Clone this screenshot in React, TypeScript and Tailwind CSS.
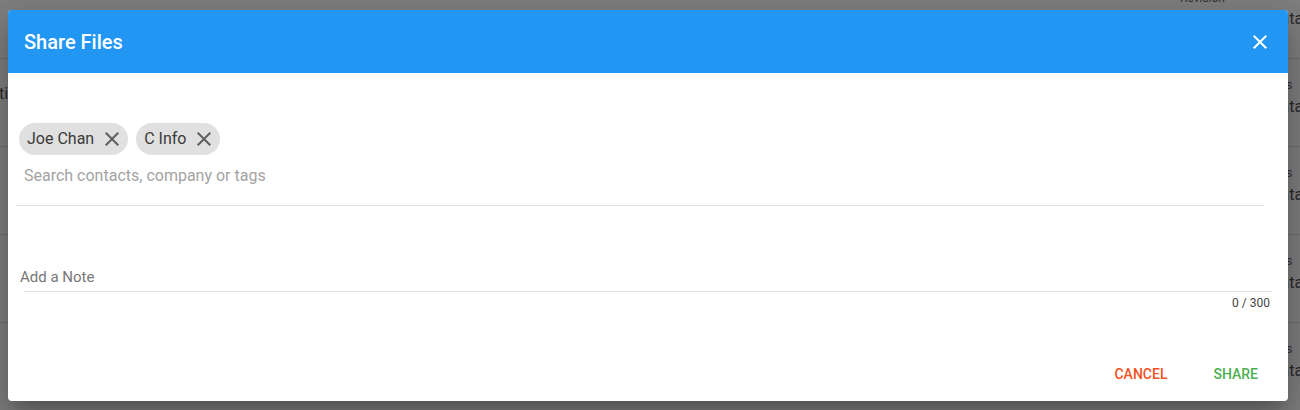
import React from "react";

const CloseIcon = ({ className }: { className?: string }) => (
  <svg viewBox="0 0 24 24" className={className} fill="currentColor" aria-hidden="true">
    <path d="M19 6.41 17.59 5 12 10.59 6.41 5 5 6.41 10.59 12 5 17.59 6.41 19 12 13.41 17.59 19 19 17.59 13.41 12z" />
  </svg>
);

const Chip = ({ label }: { label: string }) => (
  <div className="flex h-[32px] items-center rounded-full bg-[#e0e0e0] pl-[8px] pr-[4px]">
    <span className="text-[16px] leading-[20px] text-[#3a3a3a]">{label}</span>
    <CloseIcon className="ml-[6px] h-[24px] w-[24px] text-[#5f5f5f]" />
  </div>
);

const rows = [0, 1, 2, 3];

export default function App() {
  return (
    <div
      className="relative h-[410px] w-[1300px] overflow-hidden bg-white"
      style={{ fontFamily: "Roboto, 'Liberation Sans', Arial, sans-serif" }}
    >
      {/* underlying page */}
      <div className="mt-[-29px] flex flex-col">
        <div className="flex h-[88px] border-b border-[#e0e0e0] pt-[14px]">
          <div className="ml-[1180px] w-[78px] shrink-0">
            <span className="text-[12px] leading-[16px] text-[#666]">Revision</span>
          </div>
          <div className="flex shrink-0 flex-col">
            <span className="text-[12px] leading-[16px] text-[#666]">Status</span>
            <span className="ml-[12px] mt-[8px] text-[16px] leading-[20px] text-[#555]">Data</span>
          </div>
        </div>
        {rows.map((r) => (
          <div key={r} className="flex h-[88px] border-b border-[#e0e0e0]">
            <div className="ml-[-44px] w-[1302px] shrink-0 pt-[23px]">
              {r === 0 && <span className="text-[16px] leading-[20px] text-[#555]">Quotation</span>}
            </div>
            <div className="flex shrink-0 flex-col pt-[18px]">
              <span className="text-[12px] leading-[16px] text-[#666]">Status</span>
              <span className="ml-[12px] mt-[4px] text-[16px] leading-[20px] text-[#555]">Data</span>
            </div>
          </div>
        ))}
      </div>

      {/* backdrop */}
      <div className="absolute inset-0 bg-black/50" />

      {/* dialog */}
      <div className="absolute left-[8px] top-[10px] flex h-[391px] w-[1280px] flex-col overflow-hidden rounded-[4px] bg-white shadow-[0_11px_15px_-7px_rgba(0,0,0,0.2),0_24px_38px_3px_rgba(0,0,0,0.14),0_9px_46px_8px_rgba(0,0,0,0.12)]">
        <div className="flex h-[63px] shrink-0 items-center justify-between bg-[#2196f3] pl-[16px] pr-[16px]">
          <span className="text-[20px] font-medium leading-[24px] text-white">Share Files</span>
          <CloseIcon className="h-[24px] w-[24px] text-white" />
        </div>

        <div className="flex flex-1 flex-col">
          <div className="ml-[8px] mr-[24px] mt-[50px] border-b border-[#e0e0e0] pb-[19px]">
            <div className="ml-[3px] flex gap-[8px]">
              <Chip label="Joe Chan" />
              <Chip label="C Info" />
            </div>
            <div className="ml-[8px] mt-[11px] text-[16px] leading-[20px] text-[#a3a3a3]">
              Search contacts, company or tags
            </div>
          </div>

          <div className="mx-[16px] mt-[61px] border-b border-[#e0e0e0] pb-[4px]">
            <div className="ml-[-4px] text-[15px] leading-[20px] text-[#777]">Add a Note</div>
          </div>
          <div className="mr-[18px] mt-[3px] text-right text-[12px] leading-[16px] text-[#444]">0 / 300</div>

          <div className="mt-auto flex justify-end gap-[14px] pb-[17px] pr-[14px]">
            <button className="px-[16px] text-[14px] font-medium leading-[20px] text-[#f4511e]">
              CANCEL
            </button>
            <button className="px-[16px] text-[14px] font-medium leading-[20px] text-[#4caf50]">
              SHARE
            </button>
          </div>
        </div>
      </div>
    </div>
  );
}
